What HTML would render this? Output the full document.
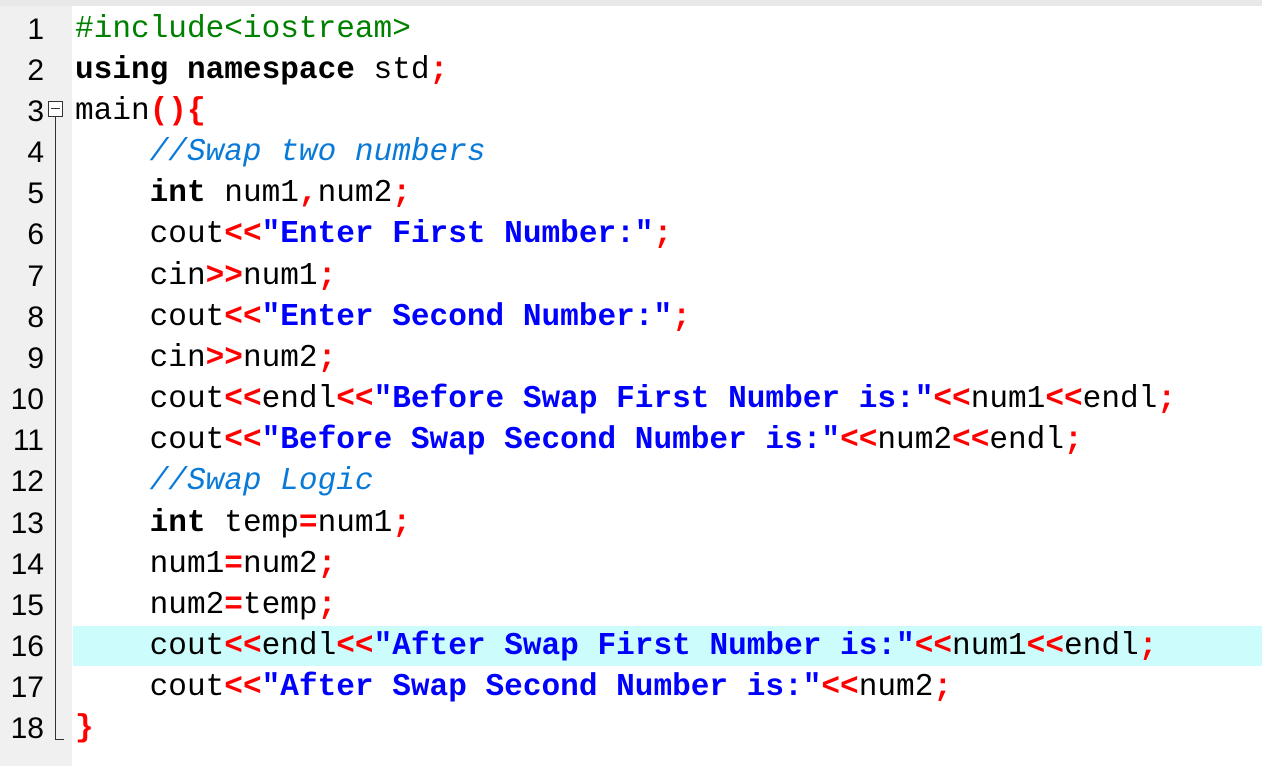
<!DOCTYPE html>
<html><head><style>
body{margin:0;width:1262px;height:766px;background:#fff;position:relative;overflow:hidden;font-family:"Liberation Mono",monospace;}
.top{position:absolute;left:0;top:0;width:1262px;height:6px;background:#e8e8e8;}
.gut{position:absolute;left:0;top:6px;width:72px;height:760px;background:#f0f0f0;}
.ln{position:absolute;left:0;width:44px;text-align:right;font:30px "Liberation Sans",sans-serif;color:#000;line-height:41px;}
.cl{position:absolute;left:75px;white-space:pre;font-size:31.1px;line-height:41px;color:#000;}
.hl{position:absolute;left:73px;top:626px;width:1189px;height:40px;background:#ccfcfc;}
.k{font-weight:bold;color:#000}
.o{color:#f00;font-weight:bold}
.s{color:#00f;font-weight:bold}
.c{color:#0a7ad8;font-style:italic}
.p{color:#008000}
</style></head><body>
<div class="top"></div>
<div class="gut"></div>
<div class="hl"></div>
<div style="position:absolute;left:48px;top:101px;width:13px;height:14px;border:1px solid #333;background:#fff"></div>
<div style="position:absolute;left:51px;top:108px;width:9px;height:1px;background:#333"></div>
<div style="position:absolute;left:55px;top:116px;width:1px;height:624px;background:#333"></div>
<div style="position:absolute;left:55px;top:739px;width:9px;height:1px;background:#333"></div>
<div class="ln" style="top:9px">1</div>
<div class="ln" style="top:50px">2</div>
<div class="ln" style="top:91px">3</div>
<div class="ln" style="top:132px">4</div>
<div class="ln" style="top:173px">5</div>
<div class="ln" style="top:214px">6</div>
<div class="ln" style="top:256px">7</div>
<div class="ln" style="top:297px">8</div>
<div class="ln" style="top:338px">9</div>
<div class="ln" style="top:379px">10</div>
<div class="ln" style="top:420px">11</div>
<div class="ln" style="top:461px">12</div>
<div class="ln" style="top:503px">13</div>
<div class="ln" style="top:544px">14</div>
<div class="ln" style="top:585px">15</div>
<div class="ln" style="top:626px">16</div>
<div class="ln" style="top:667px">17</div>
<div class="ln" style="top:708px">18</div>
<div class="cl" style="top:9px"><span class="p">#include&lt;iostream&gt;</span></div>
<div class="cl" style="top:50px"><span class="k">using namespace</span> std<span class="o">;</span></div>
<div class="cl" style="top:91px">main<span class="o">(){</span></div>
<div class="cl" style="top:132px">    <span class="c">//Swap two numbers</span></div>
<div class="cl" style="top:173px">    <span class="k">int</span> num1<span class="o">,</span>num2<span class="o">;</span></div>
<div class="cl" style="top:214px">    cout<span class="o">&lt;&lt;</span><span class="s">"Enter First Number:"</span><span class="o">;</span></div>
<div class="cl" style="top:256px">    cin<span class="o">&gt;&gt;</span>num1<span class="o">;</span></div>
<div class="cl" style="top:297px">    cout<span class="o">&lt;&lt;</span><span class="s">"Enter Second Number:"</span><span class="o">;</span></div>
<div class="cl" style="top:338px">    cin<span class="o">&gt;&gt;</span>num2<span class="o">;</span></div>
<div class="cl" style="top:379px">    cout<span class="o">&lt;&lt;</span>endl<span class="o">&lt;&lt;</span><span class="s">"Before Swap First Number is:"</span><span class="o">&lt;&lt;</span>num1<span class="o">&lt;&lt;</span>endl<span class="o">;</span></div>
<div class="cl" style="top:420px">    cout<span class="o">&lt;&lt;</span><span class="s">"Before Swap Second Number is:"</span><span class="o">&lt;&lt;</span>num2<span class="o">&lt;&lt;</span>endl<span class="o">;</span></div>
<div class="cl" style="top:461px">    <span class="c">//Swap Logic</span></div>
<div class="cl" style="top:503px">    <span class="k">int</span> temp<span class="o">=</span>num1<span class="o">;</span></div>
<div class="cl" style="top:544px">    num1<span class="o">=</span>num2<span class="o">;</span></div>
<div class="cl" style="top:585px">    num2<span class="o">=</span>temp<span class="o">;</span></div>
<div class="cl" style="top:626px">    cout<span class="o">&lt;&lt;</span>endl<span class="o">&lt;&lt;</span><span class="s">"After Swap First Number is:"</span><span class="o">&lt;&lt;</span>num1<span class="o">&lt;&lt;</span>endl<span class="o">;</span></div>
<div class="cl" style="top:667px">    cout<span class="o">&lt;&lt;</span><span class="s">"After Swap Second Number is:"</span><span class="o">&lt;&lt;</span>num2<span class="o">;</span></div>
<div class="cl" style="top:708px"><span class="o">}</span></div>
</body></html>
